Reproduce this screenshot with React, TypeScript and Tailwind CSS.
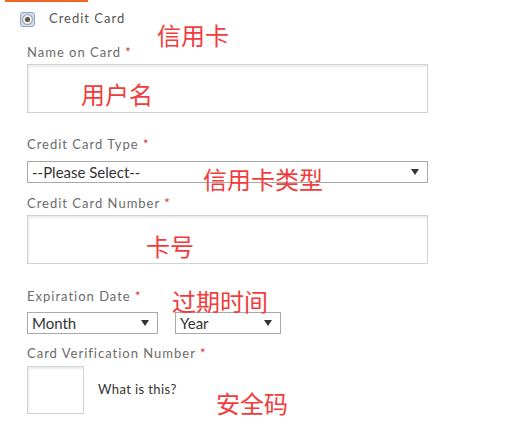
import React from "react";

const label = "text-[13px] leading-[16px] tracking-[1px] text-[#6b6b6b]";

function Req({ text }: { text: string }) {
  return (
    <div className={label}>
      {text} <span className="text-[#e0263a]">*</span>
    </div>
  );
}

function FakeSelect({ text, className }: { text: string; className: string }) {
  return (
    <div
      className={`flex h-[22px] items-center justify-between border border-[#a9a9a9] bg-white pl-[4px] pr-[8px] text-[#333] ${className}`}
    >
      <span>{text}</span>
      <svg width="8" height="6" viewBox="0 0 8 6">
        <path d="M0 0h8L4 6z" fill="#333" />
      </svg>
    </div>
  );
}

const box =
  "border border-[#ccd4d4] bg-white shadow-[inset_1px_2px_2px_rgba(0,0,0,0.08)]";

export default function App() {
  const note = "absolute text-[24px] leading-none text-[#f23c3c]";
  return (
    <div
      className="relative h-[427px] w-[519px] overflow-hidden bg-white"
      style={{ fontFamily: "Lato, 'Noto Sans CJK SC', sans-serif" }}
    >
      <div className="ml-[5px] h-[2px] w-[83px] bg-[#f26522]" />

      <div className="ml-[20px] mt-[9px] flex h-[16px] items-center gap-[14px]">
        {/* checked radio */}
        <div className="flex h-[15px] w-[15px] items-center justify-center rounded-[3px] border border-[#7fa9e6] bg-[#dcdcdc]">
          <div className="flex h-[11px] w-[11px] items-center justify-center rounded-full bg-[#ececec] shadow-[inset_0_0_0_1px_#a0a0a0]">
            <div className="h-[5px] w-[5px] rounded-full bg-[#555]" />
          </div>
        </div>
        <span className="text-[13px] tracking-[1px] text-[#555]">Credit Card</span>
      </div>

      <div className="pl-[27px]">
        <div className="mt-[17px]">
          <Req text="Name on Card" />
        </div>
        <div className={`mt-[4px] h-[49px] w-[401px] ${box}`} />

        <div className="mt-[23px]">
          <Req text="Credit Card Type" />
        </div>
        <FakeSelect text="--Please Select--" className="mt-[9px] w-[401px] text-[15px]" />

        <div className="mt-[12px]">
          <Req text="Credit Card Number" />
        </div>
        <div className={`mt-[4px] h-[49px] w-[401px] ${box}`} />

        <div className="mt-[24px]">
          <Req text="Expiration Date" />
        </div>
        <div className="mt-[8px] flex gap-[17px]">
          <FakeSelect text="Month" className="w-[131px] text-[15px]" />
          <FakeSelect text="Year" className="w-[106px] text-[15px]" />
        </div>

        <div className="mt-[11px]">
          <Req text="Card Verification Number" />
        </div>
        <div className="mt-[5px] flex items-center gap-[14px]">
          <div className={`h-[48px] w-[57px] ${box}`} />
          <span className="text-[13px] tracking-[0.4px] text-[#333]">What is this?</span>
        </div>
      </div>

      {/* red annotations */}
      <div className={note} style={{ left: 157, top: 24 }}>信用卡</div>
      <div className={note} style={{ left: 81, top: 83 }}>用户名</div>
      <div className={note} style={{ left: 203, top: 168 }}>信用卡类型</div>
      <div className={note} style={{ left: 146, top: 235 }}>卡号</div>
      <div className={note} style={{ left: 172, top: 290 }}>过期时间</div>
      <div className={note} style={{ left: 216, top: 392 }}>安全码</div>
    </div>
  );
}
